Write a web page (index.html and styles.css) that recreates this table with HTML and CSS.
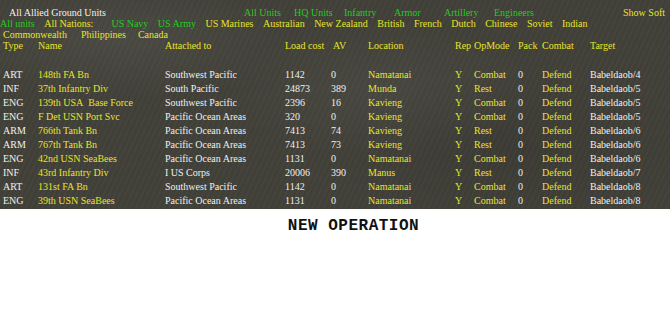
FILE: index.html
```html
<!DOCTYPE html>
<html>
<head>
<meta charset="utf-8">
<link rel="stylesheet" href="styles.css">
</head>
<body>
<div class="panel">
  <div class="line bar1">
    <span class="title w">All Allied Ground Units</span>
    <span class="g tab">All Units</span>
    <span class="g tab">HQ Units</span>
    <span class="g tab">Infantry</span>
    <span class="g tab">Armor</span>
    <span class="g tab">Artillery</span>
    <span class="g tab">Engineers</span>
    <span class="y soft">Show Soft</span>
  </div>
  <div class="line nations">
    <span class="g">All units</span>
    <span class="y wide">All Nations:</span>
    <span class="g">US Navy</span>
    <span class="g">US Army</span>
    <span class="y">US Marines</span>
    <span class="y">Australian</span>
    <span class="y">New Zealand</span>
    <span class="y">British</span>
    <span class="y">French</span>
    <span class="y">Dutch</span>
    <span class="y">Chinese</span>
    <span class="y">Soviet</span>
    <span class="y">Indian</span>
  </div>
  <div class="line nations second">
    <span class="y first">Commonwealth</span>
    <span class="y">Philippines</span>
    <span class="y">Canada</span>
  </div>
  <div class="line row head y">
    <span>Type</span><span>Name</span><span>Attached to</span><span>Load cost</span><span class="av">AV</span><span>Location</span><span>Rep</span><span>OpMode</span><span>Pack</span><span>Combat</span><span>Target</span>
  </div>
  <div class="rows">
    <div class="row data"><span class="w">ART</span><span class="y">148th FA Bn</span><span class="w">Southwest Pacific</span><span class="w">1142</span><span class="w">0</span><span class="y">Namatanai</span><span class="y">Y</span><span class="y">Combat</span><span class="w">0</span><span class="y">Defend</span><span class="w">Babeldaob/4</span></div>
    <div class="row data"><span class="w">INF</span><span class="y">37th Infantry Div</span><span class="w">South Pacific</span><span class="w">24873</span><span class="w">389</span><span class="y">Munda</span><span class="y">Y</span><span class="y">Rest</span><span class="w">0</span><span class="y">Defend</span><span class="w">Babeldaob/5</span></div>
    <div class="row data"><span class="w">ENG</span><span class="y">139th USA&nbsp; Base Force</span><span class="w">Southwest Pacific</span><span class="w">2396</span><span class="w">16</span><span class="y">Kavieng</span><span class="y">Y</span><span class="y">Combat</span><span class="w">0</span><span class="y">Defend</span><span class="w">Babeldaob/5</span></div>
    <div class="row data"><span class="w">ENG</span><span class="y">F Det USN Port Svc</span><span class="w">Pacific Ocean Areas</span><span class="w">320</span><span class="w">0</span><span class="y">Kavieng</span><span class="y">Y</span><span class="y">Combat</span><span class="w">0</span><span class="y">Defend</span><span class="w">Babeldaob/5</span></div>
    <div class="row data"><span class="w">ARM</span><span class="y">766th Tank Bn</span><span class="w">Pacific Ocean Areas</span><span class="w">7413</span><span class="w">74</span><span class="y">Kavieng</span><span class="y">Y</span><span class="y">Rest</span><span class="w">0</span><span class="y">Defend</span><span class="w">Babeldaob/6</span></div>
    <div class="row data"><span class="w">ARM</span><span class="y">767th Tank Bn</span><span class="w">Pacific Ocean Areas</span><span class="w">7413</span><span class="w">73</span><span class="y">Kavieng</span><span class="y">Y</span><span class="y">Rest</span><span class="w">0</span><span class="y">Defend</span><span class="w">Babeldaob/6</span></div>
    <div class="row data"><span class="w">ENG</span><span class="y">42nd USN SeaBees</span><span class="w">Pacific Ocean Areas</span><span class="w">1131</span><span class="w">0</span><span class="y">Namatanai</span><span class="y">Y</span><span class="y">Combat</span><span class="w">0</span><span class="y">Defend</span><span class="w">Babeldaob/6</span></div>
    <div class="row data"><span class="w">INF</span><span class="y">43rd Infantry Div</span><span class="w">I US Corps</span><span class="w">20006</span><span class="w">390</span><span class="y">Manus</span><span class="y">Y</span><span class="y">Rest</span><span class="w">0</span><span class="y">Defend</span><span class="w">Babeldaob/7</span></div>
    <div class="row data"><span class="w">ART</span><span class="y">131st FA Bn</span><span class="w">Southwest Pacific</span><span class="w">1142</span><span class="w">0</span><span class="y">Namatanai</span><span class="y">Y</span><span class="y">Combat</span><span class="w">0</span><span class="y">Defend</span><span class="w">Babeldaob/8</span></div>
    <div class="row data"><span class="w">ENG</span><span class="y">39th USN SeaBees</span><span class="w">Pacific Ocean Areas</span><span class="w">1131</span><span class="w">0</span><span class="y">Namatanai</span><span class="y">Y</span><span class="y">Combat</span><span class="w">0</span><span class="y">Defend</span><span class="w">Babeldaob/8</span></div>
  </div>
</div>
<div class="newop">NEW OPERATION</div>
</body>
</html>
```
FILE: styles.css
```css
html, body {
  margin: 0;
  padding: 0;
  background: #ffffff;
}
.panel {
  height: 209px;
  box-sizing: border-box;
  padding-top: 7px;
  font-family: "Liberation Serif", "Times New Roman", serif;
  font-size: 10px;
  background-color: #403f38;
  background-image:
    radial-gradient(ellipse 180px 60px at 120px 40px, rgba(255,255,255,0.05), transparent),
    radial-gradient(ellipse 200px 80px at 520px 150px, rgba(0,0,0,0.08), transparent),
    radial-gradient(ellipse 160px 70px at 380px 90px, rgba(255,255,255,0.04), transparent),
    repeating-linear-gradient(115deg, rgba(255,255,255,0.025) 0 2px, transparent 2px 5px);
}
.w { color: #f0f0ee; }
.y { color: #e8e42a; }
.g { color: #22cc22; }
.line {
  height: 11px;
  line-height: 11px;
  white-space: nowrap;
}
.bar1 {
  display: flex;
  padding-left: 9px;
  padding-right: 5px;
}
.title { width: 235px; }
.tab { width: 50px; }
.soft { margin-left: auto; }
.nations {
  display: flex;
}
.nations span { margin-right: 9.5px; }
.nations .wide { margin-right: 18px; }
.nations.second { padding-left: 3px; }
.nations.second span { margin-right: 12px; }
.nations.second .first { margin-right: 14px; }
.row {
  display: grid;
  grid-template-columns: 35px 127px 120px 46px 37px 87px 19px 44px 24px 48px 1fr;
  padding-left: 3px;
  white-space: nowrap;
}
.head .av { padding-left: 2px; }
.rows {
  margin-top: 17px;
}
.data {
  height: 14px;
  line-height: 14px;
}
.newop {
  font-family: "Liberation Mono", "Courier New", monospace;
  font-weight: bold;
  font-size: 16px;
  letter-spacing: 0.5px;
  color: #111;
  text-align: center;
  padding-left: 37px;
  line-height: 16px;
  margin-top: 9px;
}
```
